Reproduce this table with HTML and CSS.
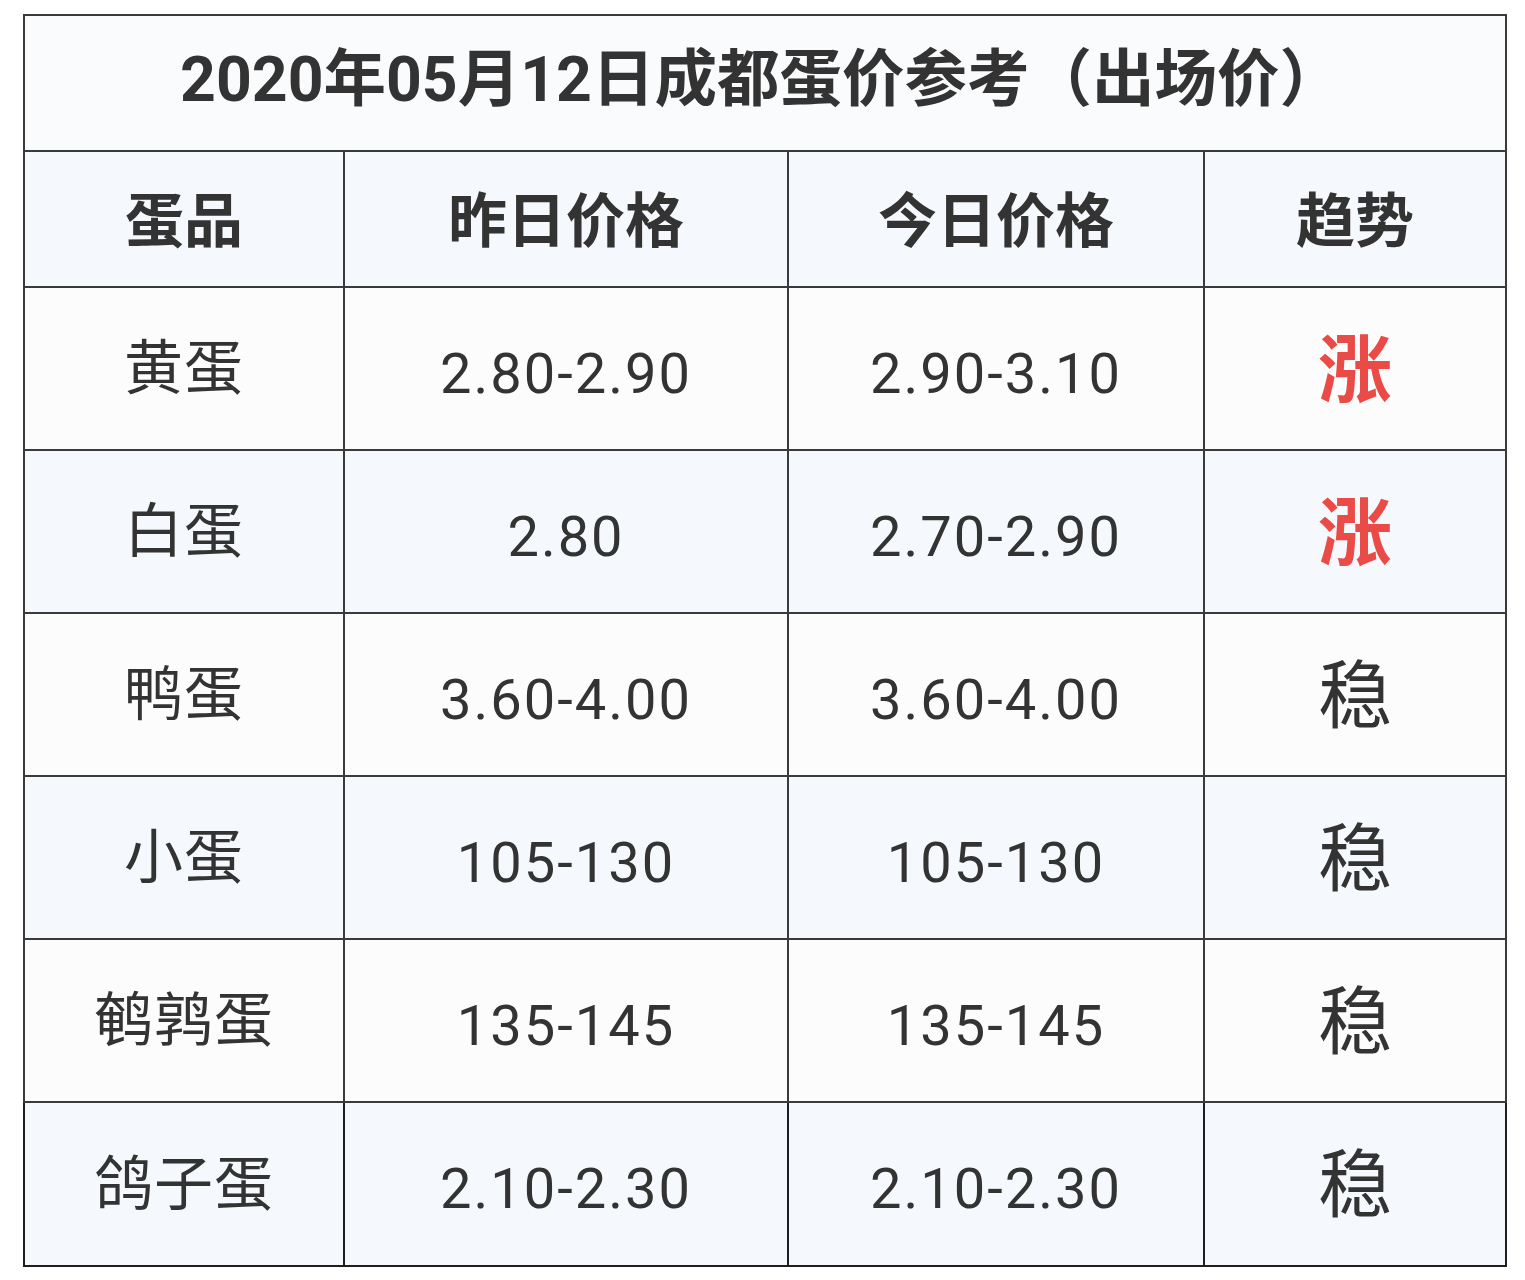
FILE: index.html
```html
<!DOCTYPE html>
<html lang="zh-CN">
<head>
<meta charset="utf-8">
<title>2020年05月12日成都蛋价参考</title>
<link rel="stylesheet" href="styles.css">
</head>
<body>
<div class="page">
<table class="price-table">
  <colgroup>
    <col class="c1"><col class="c2"><col class="c3"><col class="c4">
  </colgroup>
  <tr class="title-row"><th colspan="4">2020年05月12日成都蛋价参考（出场价）</th></tr>
  <tr class="head-row"><th>蛋品</th><th>昨日价格</th><th>今日价格</th><th>趋势</th></tr>
  <tr class="row odd"><td class="name">黄蛋</td><td class="num">2.80-2.90</td><td class="num">2.90-3.10</td><td class="trend up">涨</td></tr>
  <tr class="row even"><td class="name">白蛋</td><td class="num">2.80</td><td class="num">2.70-2.90</td><td class="trend up">涨</td></tr>
  <tr class="row odd"><td class="name">鸭蛋</td><td class="num">3.60-4.00</td><td class="num">3.60-4.00</td><td class="trend">稳</td></tr>
  <tr class="row even"><td class="name">小蛋</td><td class="num">105-130</td><td class="num">105-130</td><td class="trend">稳</td></tr>
  <tr class="row odd"><td class="name">鹌鹑蛋</td><td class="num">135-145</td><td class="num">135-145</td><td class="trend">稳</td></tr>
  <tr class="row even last"><td class="name">鸽子蛋</td><td class="num">2.10-2.30</td><td class="num">2.10-2.30</td><td class="trend">稳</td></tr>
</table>
</div>
</body>
</html>
```
FILE: styles.css
```css
html, body {
  margin: 0;
  padding: 0;
  background: #ffffff;
}
.page {
  padding: 14px 0 0 23px;
}
.price-table {
  border-collapse: collapse;
  table-layout: fixed;
  width: 1482px;
  color: #333333;
  font-family: "Noto Sans CJK SC", "Noto Sans", sans-serif;
}
.c1 { width: 320px; }
.c2 { width: 444px; }
.c3 { width: 416px; }
.c4 { width: 302px; }
.price-table th,
.price-table td {
  border: 2px solid #3a3a3a;
  text-align: center;
  vertical-align: middle;
  padding: 0;
}
.title-row { height: 136px; }
.title-row th {
  background: #fafbfc;
  font-size: 62.5px;
  font-weight: 700;
  line-height: 1;
  font-family: Roboto, "Noto Sans CJK SC", sans-serif;
  padding: 0 8px 6px 0;
}
.head-row { height: 136px; }
.head-row th {
  background: #f5f8fc;
  font-size: 59px;
  font-weight: 700;
  line-height: 1;
  padding-bottom: 6px;
}
.row { height: 163px; }
.row td {
  line-height: 1;
}
.row.odd td { background: #fcfcfc; }
.row.even td { background: #f5f8fc; }
.row.last { height: 164px; }
.row.last td { border-color: #1e1e1e; }
.name {
  font-size: 59px;
  font-weight: 400;
  letter-spacing: 1px;
  padding-bottom: 10px !important;
}
.num {
  font-family: Roboto, "Noto Sans", sans-serif;
  font-size: 56px;
  letter-spacing: 2px;
  padding-top: 10px !important;
}
.trend {
  font-size: 74px;
  font-weight: 400;
  color: #333333;
  padding-bottom: 10px !important;
}
.trend.up {
  color: #ea4b47;
  font-weight: 700;
}
```
